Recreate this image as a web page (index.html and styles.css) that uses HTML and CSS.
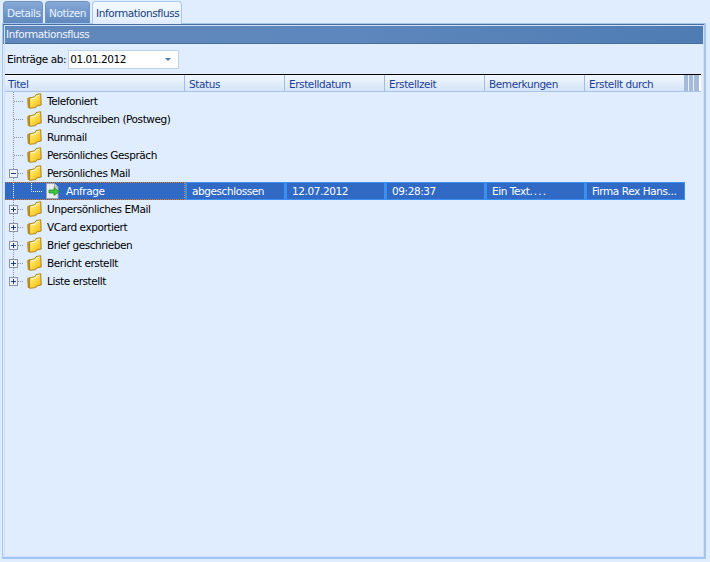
FILE: index.html
```html
<!DOCTYPE html>
<html lang="de">
<head>
<meta charset="utf-8">
<title>Informationsfluss</title>
<link rel="stylesheet" href="styles.css">
</head>
<body>
<svg class="defs" width="0" height="0">
  <defs>
    <linearGradient id="fg" x1="0" y1="0" x2="1" y2="1">
      <stop offset="0" stop-color="#fff6b0"/><stop offset="0.5" stop-color="#fcd93f"/><stop offset="1" stop-color="#eeb01c"/>
    </linearGradient>
    <symbol id="folder" viewBox="0 0 15 16">
      <path d="M.7 5.5 L3 4.5 L3 14.5 L1.2 14.5 Z" fill="#d09a1a" stroke="#a67a14" stroke-width=".8"/>
      <path d="M2.6 5 L8 3.6 L9 1.6 L13.7 .7 L14.2 12 L9.5 13 L8.8 14.6 L2.6 15.3 Z" fill="url(#fg)" stroke="#b0851a" stroke-width="1"/>
      <path d="M4 6 L9 4.8 L10 2.8 L12.6 2.2" fill="none" stroke="#fffbe0" stroke-width="1"/>
    </symbol>
    <symbol id="plus" viewBox="0 0 9 9">
      <rect x=".5" y=".5" width="8" height="8" fill="#eef2f8" stroke="#8a94a6"/>
      <path d="M2 4.5H7M4.5 2V7" stroke="#1f3f7a"/>
    </symbol>
    <symbol id="minus" viewBox="0 0 9 9">
      <rect x=".5" y=".5" width="8" height="8" fill="#eef2f8" stroke="#8a94a6"/>
      <path d="M2 4.5H7" stroke="#1f3f7a"/>
    </symbol>
  </defs>
</svg>
<div class="tabs">
  <div class="tab">Details</div>
  <div class="tab">Notizen</div>
  <div class="tab active">Informationsfluss</div>
</div>
<main class="panel">
  <h1 class="panel-title">Informationsfluss</h1>
  <div class="filter">
    <label class="filter-label">Einträge ab:</label>
    <div class="combo"><span>01.01.2012</span><i class="arrow"></i></div>
  </div>
  <div class="grid">
    <div class="head">
      <div class="hc c-title">Titel</div>
      <div class="hc c">Status</div>
      <div class="hc c">Erstelldatum</div>
      <div class="hc c">Erstellzeit</div>
      <div class="hc c">Bemerkungen</div>
      <div class="hc c">Erstellt durch</div>
      <div class="grip"><b></b><b></b><b></b></div>
    </div>
    <div class="body">
      <div class="row"><svg class="tree" width="24" height="18"><path class="dot" d="M9.5 0V18M10 9.5H20"/></svg><svg class="fold"><use href="#folder"/></svg><span class="name">Telefoniert</span></div>
      <div class="row"><svg class="tree" width="24" height="18"><path class="dot" d="M9.5 0V18M10 9.5H20"/></svg><svg class="fold"><use href="#folder"/></svg><span class="name">Rundschreiben (Postweg)</span></div>
      <div class="row"><svg class="tree" width="24" height="18"><path class="dot" d="M9.5 0V18M10 9.5H20"/></svg><svg class="fold"><use href="#folder"/></svg><span class="name">Runmail</span></div>
      <div class="row"><svg class="tree" width="24" height="18"><path class="dot" d="M9.5 0V18M10 9.5H20"/></svg><svg class="fold"><use href="#folder"/></svg><span class="name">Persönliches Gespräch</span></div>
      <div class="row"><svg class="tree" width="24" height="18"><path class="dot" d="M9.5 0V18M10 9.5H20"/><use href="#minus" x="5" y="5" width="9" height="9"/></svg><svg class="fold"><use href="#folder"/></svg><span class="name">Persönliches Mail</span></div>
      <div class="row selected">
        <div class="sel-title">
          <svg class="tree-child" width="42" height="16"><path class="dot-w" d="M9.5 0V16M27.5 0V8.5H38"/></svg>
          <svg class="doc" width="14" height="16" viewBox="0 0 14 16">
            <path d="M.5 .5H8.5L12 4V15.5H.5Z" fill="#e9edf2" stroke="#9aa4b3"/>
            <path d="M8.5 .5V4H12" fill="#d5dbe3" stroke="#9aa4b3"/>
            <path d="M3 7H8V4.5L13.5 8.5L8 12.5V10H3Z" fill="#3cc43c" stroke="#1c8a1c" stroke-width=".7"/>
          </svg>
          <span class="name child">Anfrage</span>
        </div>
        <div class="cell">abgeschlossen</div>
        <div class="cell">12.07.2012</div>
        <div class="cell">09:28:37</div>
        <div class="cell">Ein Text<span class="dots">....</span></div>
        <div class="cell">Firma Rex Hans...</div>
      </div>
      <div class="row"><svg class="tree" width="24" height="18"><path class="dot" d="M9.5 0V18M10 9.5H20"/><use href="#plus" x="5" y="5" width="9" height="9"/></svg><svg class="fold"><use href="#folder"/></svg><span class="name">Unpersönliches EMail</span></div>
      <div class="row"><svg class="tree" width="24" height="18"><path class="dot" d="M9.5 0V18M10 9.5H20"/><use href="#plus" x="5" y="5" width="9" height="9"/></svg><svg class="fold"><use href="#folder"/></svg><span class="name">VCard exportiert</span></div>
      <div class="row"><svg class="tree" width="24" height="18"><path class="dot" d="M9.5 0V18M10 9.5H20"/><use href="#plus" x="5" y="5" width="9" height="9"/></svg><svg class="fold"><use href="#folder"/></svg><span class="name">Brief geschrieben</span></div>
      <div class="row"><svg class="tree" width="24" height="18"><path class="dot" d="M9.5 0V18M10 9.5H20"/><use href="#plus" x="5" y="5" width="9" height="9"/></svg><svg class="fold"><use href="#folder"/></svg><span class="name">Bericht erstellt</span></div>
      <div class="row"><svg class="tree" width="24" height="18"><path class="dot" d="M9.5 0V9.5M10 9.5H20"/><use href="#plus" x="5" y="5" width="9" height="9"/></svg><svg class="fold"><use href="#folder"/></svg><span class="name">Liste erstellt</span></div>
    </div>
  </div>
</main>
</body>
</html>
```
FILE: styles.css
```css
* { box-sizing: border-box; }
html, body { height: 100%; }
body {
  margin: 0;
  background: #e0edff;
  font-family: "DejaVu Sans", sans-serif;
  font-size: 10.5px;
  letter-spacing: -0.42px;
  color: #000;
  padding: 1px 4px 3px 2px;
  display: flex;
  flex-direction: column;
  overflow: hidden;
}
.defs { position: absolute; }
.tabs { display: flex; gap: 2px; height: 22px; padding-left: 1px; flex: none; }
.tab {
  height: 22px;
  padding: 4px 3px 0;
  border: 1px solid #6f93c2;
  border-bottom: 0;
  border-radius: 4px 4px 0 0;
  background: linear-gradient(#87a9d6, #5f88bd);
  color: #e9f2ff;
  line-height: 15px;
  white-space: nowrap;
}
.tab:nth-child(1) { width: 40px; }
.tab:nth-child(2) { width: 45px; }
.tab.active {
  width: 90px;
  height: 23px;
  background: linear-gradient(#f4f9ff, #e0edff);
  border-color: #a9c8ef;
  color: #17407e;
  position: relative;
  z-index: 1;
}
.panel {
  flex: 1;
  border: 1px solid #a3c6f0;
  border-right-width: 2px;
  border-bottom-width: 2px;
  background: #e0edff;
  outline: 1px solid #cfe0f8;
  outline-offset: -3px;
  display: flex;
  flex-direction: column;
  min-height: 0;
}
.panel-title {
  margin: 0;
  height: 20px;
  font: inherit;
  line-height: 19px;
  padding-left: 3px;
  color: #f0f6ff;
  background: linear-gradient(90deg, #6288bb, #5d87bd 50%, #4e7cb2);
  border: 1px solid #466f9f;
  border-width: 1px 0 1px 0;
  flex: none;
}
.filter {
  display: flex;
  align-items: center;
  gap: 2px;
  height: 30px;
  padding: 0 0 0 4px;
  flex: none;
}
.combo {
  width: 111px;
  height: 19px;
  background: #fff;
  border: 1px solid #bcd3ef;
  display: flex;
  align-items: center;
  justify-content: space-between;
  padding: 0 7px 0 1px;
}
.arrow { width: 0; height: 0; border: 3px solid transparent; border-top: 3px solid #4e74a8; border-bottom: 0; }
.grid { padding: 0 3px 0 1px; }
.head {
  display: flex;
  height: 18px;
  border-top: 1px solid #000;
  border-bottom: 1px solid #a9c3e2;
  background: #fff;
}
.hc {
  background: linear-gradient(#f2f7fe, #d4e4f8);
  color: #1c3f96;
  line-height: 19px;
  padding-left: 4px;
  border-right: 1px solid #a3bddd;
  white-space: nowrap;
  overflow: hidden;
}
.c-title { width: 181px; }
.c { width: 100px; }
.grip { width: 14px; display: flex; background: #a3bad9; gap: 1px; }
.grip b { background: #a3bad9; border-right: 1px solid #eaf1fb; width: 4px; }
.grip b:last-child { border: 0; flex: 1; }
.row { height: 18px; display: flex; align-items: center; line-height: 18px; }
.tree { flex: none; display: block; }
.fold { width: 15px; height: 16px; flex: none; margin-left: -1px; }
.name { margin-left: 5px; white-space: nowrap; }
.dot { fill: none; stroke: #8a94a0; stroke-width: 1; stroke-dasharray: 1 1; }
.dot-w { fill: none; stroke: #fff; stroke-width: 1; stroke-dasharray: 1 1; }
.selected { width: 681px; background: #316ac5; color: #fff; }
.sel-title {
  width: 181px;
  height: 18px;
  display: flex;
  align-items: center;
  border: 1px dotted #ef7a1a;
  flex: none;
}
.tree-child { flex: none; margin-left: -1px; display: block; }
.doc { flex: none; }
.name.child { margin-left: 6px; }
.cell {
  width: 100px;
  height: 18px;
  line-height: 16px;
  padding-left: 5px;
  border: 2px solid #3a8ff0;
  border-width: 1px 1px 1px 2px;
  white-space: nowrap;
  overflow: hidden;
  flex: none;
}
.dots { letter-spacing: 1.1px; }
```
